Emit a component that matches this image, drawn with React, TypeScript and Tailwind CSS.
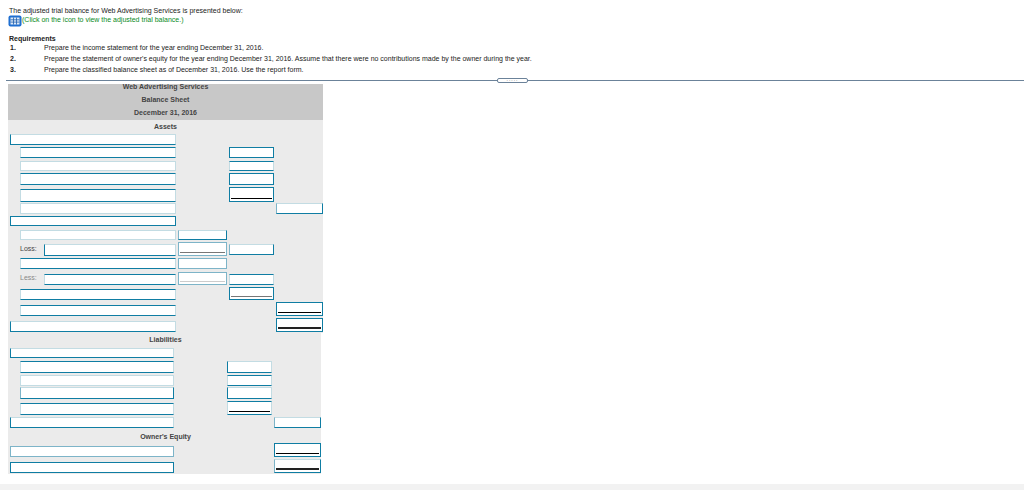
const FONT = "font-['Liberation_Sans',Arial,sans-serif]";

// border treatments seen on the answer boxes
const TEAL = "border-[#0f7da3]";
const SOFT = "border-[#c3dce3]";
const TB = "border-t-[#0f7da3] border-b-[#0f7da3] border-l-[#c3dce3] border-r-[#c3dce3]";
const LB = "border-l-[#0f7da3] border-b-[#0f7da3] border-t-[#c3dce3] border-r-[#c3dce3]";
const BR = "border-b-[#0f7da3] border-r-[#0f7da3] border-t-[#c3dce3] border-l-[#7db4c8]";
const MID = "border-[#7db4c8]";

function Box({
  className,
  tone = TEAL,
  line,
}: {
  className: string;
  tone?: string;
  line?: "black" | "double" | "gray" | "pale";
}) {
  return (
    <div className={`flex flex-col justify-end bg-white border px-px pb-[2px] ${tone} ${className}`}>
      {line === "black" && <div className="h-px bg-black" />}
      {line === "double" && <div className="h-[2px] bg-[#222]" />}
      {line === "gray" && <div className="h-px bg-[#777]" />}
      {line === "pale" && <div className="h-px bg-[#ccc]" />}
    </div>
  );
}

function Heading({ children, className }: { children: string; className: string }) {
  return (
    <div className={`flex items-center justify-center text-[7px] font-bold text-[#444] ${className}`}>{children}</div>
  );
}

export default function App() {
  return (
    <div className={`relative h-[490px] w-[1024px] overflow-hidden bg-white text-[#222] ${FONT}`}>
      <div className="pl-[9px] pt-[6px] text-[7px] leading-[9px]">
        The adjusted trial balance for Web Advertising Services is presented below:
      </div>
      <div className="flex h-[11px] items-center pl-[8px] text-[7px] text-[#0a8a1e]">
        <svg width="14" height="12" viewBox="0 0 14 12" className="shrink-0">
          <rect x="0.5" y="0.5" width="13" height="11" rx="2" fill="#1f6fd1" />
          <rect x="2.5" y="2.5" width="9" height="7" fill="#dfeaf7" />
          <path d="M2.5 4.8h9M2.5 7.1h9M5.5 2.5v7M8.5 2.5v7" stroke="#1f5fae" strokeWidth="0.8" />
        </svg>
        <span>(Click on the icon to view the adjusted trial balance.)</span>
      </div>

      <div className="mt-[8px] pl-[9px] text-[7px] font-bold leading-[10px]">Requirements</div>
      <div className="mt-[-2px] text-[7px] leading-[11px]">
        <div className="flex">
          <span className="w-[44px] pl-[10px] font-bold">1.</span>
          <span>Prepare the income statement for the year ending December 31, 2016.</span>
        </div>
        <div className="flex">
          <span className="w-[44px] pl-[10px] font-bold">2.</span>
          <span>
            Prepare the statement of owner's equity for the year ending December 31, 2016. Assume that there were no
            contributions made by the owner during the year.
          </span>
        </div>
        <div className="flex">
          <span className="w-[44px] pl-[10px] font-bold">3.</span>
          <span>Prepare the classified balance sheet as of December 31, 2016. Use the report form.</span>
        </div>
      </div>

      {/* divider with collapse handle */}
      <div className="relative ml-[6px] mt-[5px] h-px bg-[#6b8299]">
        <div className="absolute left-[491px] top-[-2px] flex h-[5px] w-[31px] items-center justify-center rounded-[2px] border border-[#6b8299] bg-white text-[5px] leading-none tracking-[1px] text-[#555]">
          <span className="mt-[-2px]">.....</span>
        </div>
      </div>

      <div className="ml-[8px] mt-[3px] w-[315px]">
        <div className="h-[36px] bg-[#c8c8c8]">
          <Heading className="h-[7px]">Web Advertising Services</Heading>
          <Heading className="mt-[5px] h-[8px]">Balance Sheet</Heading>
          <Heading className="mt-[5px] h-[8px]">December 31, 2016</Heading>
        </div>

        {/* assets */}
        <div className="h-[213px] bg-[#ebebeb] pl-[2px]">
          <Heading className="h-[14px] pr-[2px]">Assets</Heading>
          <Box className="h-[11px] w-[166px]" tone={LB} />

          <div className="mt-[2px] flex h-[11px] gap-[53px] pl-[10px]">
            <Box className="w-[156px]" tone={TB} />
            <Box className="w-[45px]" />
          </div>
          <div className="mt-[3px] flex h-[10px] gap-[53px] pl-[10px]">
            <Box className="w-[156px]" tone={SOFT} />
            <Box className="w-[45px]" tone={TB} />
          </div>
          <div className="mt-[2px] flex h-[12px] gap-[53px] pl-[10px]">
            <Box className="w-[156px]" tone={TB} />
            <Box className="w-[45px]" />
          </div>
          <div className="mt-[2px] flex h-[15px] items-end gap-[53px] pl-[10px]">
            <Box className="h-[13px] w-[156px]" tone={TB} />
            <Box className="h-[15px] w-[45px]" line="black" />
          </div>
          <div className="mt-[1px] flex h-[11px] gap-[100px] pl-[10px]">
            <Box className="w-[156px]" tone={SOFT} />
            <Box className="w-[47px]" tone={BR} />
          </div>
          <Box className="mt-[2px] h-[10px] w-[166px]" />

          <div className="mt-[4px] flex h-[10px] gap-[2px] pl-[10px]">
            <Box className="w-[156px]" tone={SOFT} />
            <Box className="w-[49px]" tone={BR} />
          </div>

          <div className="mt-[2px] flex h-[14px] items-end gap-[2px] pl-[10px]">
            <div className="flex w-[22px] items-center self-center text-[7px] text-[#444]">Loss:</div>
            <Box className="h-[12px] w-[132px]" tone={LB} />
            <Box className="h-[14px] w-[49px]" tone={MID} line="gray" />
            <Box className="mb-px h-[11px] w-[45px]" tone={BR} />
          </div>

          <div className="mt-[2px] flex h-[11px] gap-[2px] pl-[10px]">
            <Box className="w-[156px]" tone={TB} />
            <Box className="w-[49px]" tone={MID} />
          </div>

          <div className="mt-[3px] flex h-[13px] items-end gap-[2px] pl-[10px]">
            <div className="flex w-[22px] items-center self-center text-[7px] text-[#888]">Less:</div>
            <Box className="h-[11px] w-[132px]" tone={TB} />
            <Box className="h-[13px] w-[49px]" tone={MID} line="pale" />
            <Box className="h-[11px] w-[45px]" tone={TB} />
          </div>

          <div className="mt-[2px] flex h-[13px] items-end gap-[53px] pl-[10px]">
            <Box className="h-[11px] w-[156px]" tone={TB} />
            <Box className="h-[13px] w-[45px]" line="gray" />
          </div>
          <div className="mt-[2px] flex h-[14px] items-end gap-[100px] pl-[10px]">
            <Box className="h-[11px] w-[156px]" tone={TB} />
            <Box className="h-[14px] w-[47px]" line="black" />
          </div>
          <div className="mt-[2px] flex h-[14px] items-end gap-[100px]">
            <Box className="h-[11px] w-[166px]" tone={LB} />
            <Box className="h-[14px] w-[47px]" line="double" />
          </div>
        </div>

        {/* liabilities and owner's equity */}
        <div className="h-[141px] w-[313px] bg-[#ebebeb] pl-[2px]">
          <Heading className="h-[15px]">Liabilities</Heading>
          <Box className="h-[10px] w-[164px]" tone={LB} />

          <div className="mt-[3px] flex h-[12px] gap-[53px] pl-[10px]">
            <Box className="w-[154px]" tone={TB} />
            <Box className="w-[45px]" tone={LB} />
          </div>
          <div className="mt-[2px] flex h-[11px] gap-[53px] pl-[10px]">
            <Box className="w-[154px]" tone={SOFT} />
            <Box className="w-[45px]" tone={TB} />
          </div>
          <div className="mt-px flex h-[12px] gap-[53px] pl-[10px]">
            <Box className="w-[154px]" tone={BR} />
            <Box className="w-[45px]" tone={LB} />
          </div>
          <div className="mt-[3px] flex h-[13px] items-end gap-[53px] pl-[10px]">
            <Box className="h-[12px] w-[154px]" tone={TB} />
            <Box className="h-[14px] w-[45px]" tone={TB} line="black" />
          </div>
          <div className="mt-[2px] flex h-[11px] gap-[100px]">
            <Box className="w-[164px]" tone={LB} />
            <Box className="w-[47px]" tone={BR} />
          </div>

          <Heading className="h-[15px] pt-[3px]">Owner's Equity</Heading>

          <div className="flex h-[14px] items-end gap-[100px]">
            <Box className="h-[11px] w-[164px]" tone={MID} />
            <Box className="h-[14px] w-[47px]" line="black" />
          </div>
          <div className="mt-[2px] flex h-[14px] items-end gap-[100px]">
            <Box className="h-[11px] w-[164px]" />
            <Box className="h-[14px] w-[47px]" tone={BR} line="double" />
          </div>
        </div>
      </div>

      <div className="absolute inset-x-0 bottom-0 h-[6px] bg-[#f2f2f2]" />
    </div>
  );
}
